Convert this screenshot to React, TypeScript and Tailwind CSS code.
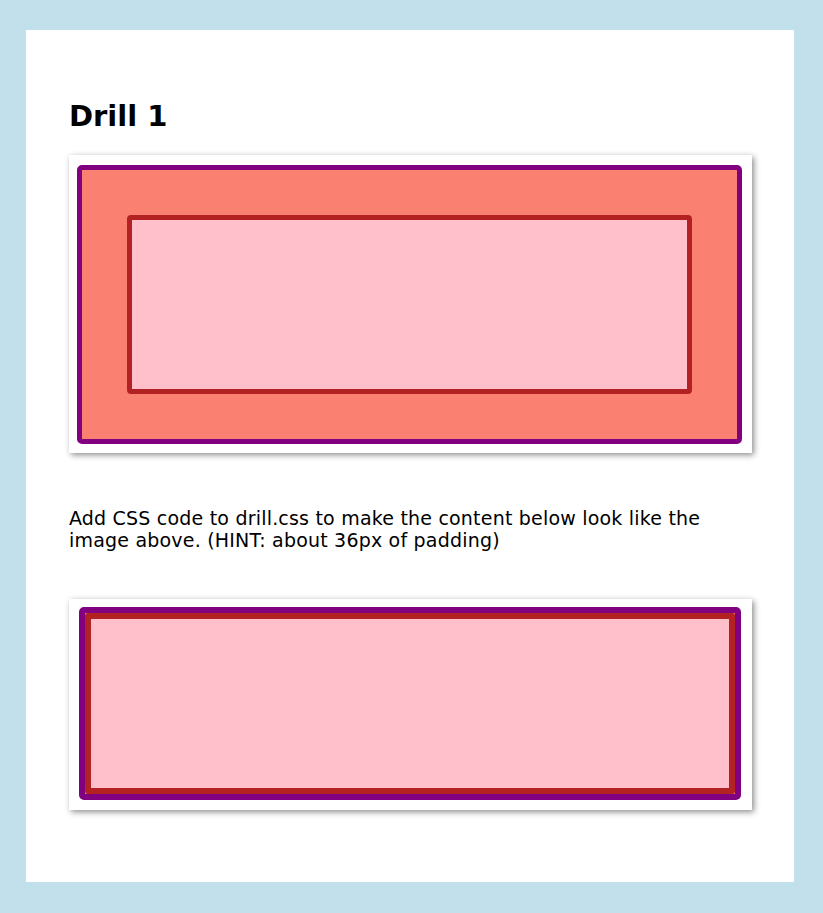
export default function App() {
  return (
    <div className="min-h-screen bg-[#c1e0ec] pt-[30px] pl-[26px] pr-[29px] pb-[31px]" style={{ fontFamily: '"DejaVu Sans", Verdana, sans-serif' }}>
      <div className="bg-white w-[768px] h-[852px] pl-[43px] pr-[42px] pt-[69px]">
        <h1 className="text-[29px] leading-[34px] font-bold text-black">Drill 1</h1>
        <div className="mt-[22px] bg-white pl-[8px] pt-[10px] pr-[10px] pb-[9px] shadow-[2px_2px_6px_rgba(0,0,0,0.45)]">
          <div className="border-[5px] border-[#800080] bg-[#fa8072] rounded-[5px] p-[45px]">
            <div className="border-[5px] border-[#b22222] bg-[#ffc0cb] rounded-[4px] h-[179px]" />
          </div>
        </div>
        <p className="mt-[54px] text-[19px] leading-[22px] tracking-[0.2px] text-black w-[650px]">
          Add CSS code to drill.css to make the content below look like the image above. (HINT: about 36px of padding)
        </p>
        <div className="mt-[48px] bg-white pl-[10px] pt-[8px] pr-[11px] pb-[10px] shadow-[2px_2px_6px_rgba(0,0,0,0.45)]">
          <div className="border-[6px] border-[#800080] bg-[#fa8072] rounded-[5px]">
            <div className="border-[6px] border-[#b22222] bg-[#ffc0cb] rounded-[3px] h-[181px]" />
          </div>
        </div>
      </div>
    </div>
  );
}
